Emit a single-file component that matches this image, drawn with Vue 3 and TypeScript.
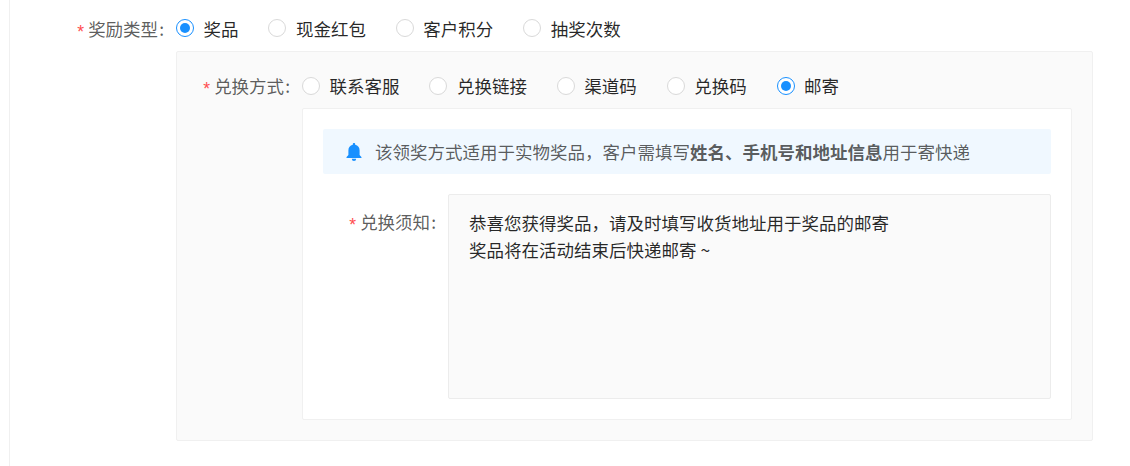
<script setup lang="ts">
const rewardTypes = [
  { label: '奖品', checked: true },
  { label: '现金红包', checked: false },
  { label: '客户积分', checked: false },
  { label: '抽奖次数', checked: false },
]
const methods = [
  { label: '联系客服', checked: false },
  { label: '兑换链接', checked: false },
  { label: '渠道码', checked: false },
  { label: '兑换码', checked: false },
  { label: '邮寄', checked: true },
]
const notice = '恭喜您获得奖品，请及时填写收货地址用于奖品的邮寄\n奖品将在活动结束后快递邮寄 ~'
</script>

<template>
  <div class="page">
    <div class="form">
      <div class="row top-row">
        <div class="label label-top"><span class="req">*</span>奖励类型<span class="colon">:</span></div>
        <div class="radios radios-top">
          <label v-for="r in rewardTypes" :key="r.label" class="radio">
            <span class="dot" :class="{ on: r.checked }"></span>
            <span>{{ r.label }}</span>
          </label>
        </div>
      </div>
      <div class="panel">
        <div class="row method-row">
          <div class="label label-method"><span class="req">*</span>兑换方式<span class="colon">:</span></div>
          <div class="radios">
            <label v-for="r in methods" :key="r.label" class="radio">
              <span class="dot" :class="{ on: r.checked }"></span>
              <span>{{ r.label }}</span>
            </label>
          </div>
        </div>
        <div class="inner">
          <div class="alert">
            <svg class="bell" viewBox="0 0 16 18" width="16" height="18" fill="#1890ff" aria-hidden="true">
              <path d="M8 0c-.7 0-1.2.5-1.2 1.2v.6C4 2.3 2.4 4.6 2.4 7.2V12L.6 14c-.3.4-.1 1 .4 1h14c.5 0 .7-.6.4-1l-1.8-2V7.2c0-2.6-1.6-4.9-4.4-5.4v-.6C9.2.5 8.7 0 8 0zM5.8 15.8a2.2 2.2 0 0 0 4.4 0z" />
            </svg>
            <span class="alert-text">该领奖方式适用于实物奖品，客户需填写<b>姓名、手机号和地址信息</b>用于寄快递</span>
          </div>
          <div class="row notice-row">
            <div class="label label-notice"><span class="req">*</span>兑换须知<span class="colon">:</span></div>
            <div class="textarea">{{ notice }}</div>
          </div>
        </div>
      </div>
    </div>
  </div>
</template>

<style>
html, body { margin: 0; background: #fff; overflow: hidden; }
</style>

<style scoped>
.page {
  box-sizing: border-box;
  width: 1130px;
  height: 466px;
  padding-left: 9px;
  font-family: "Noto Sans CJK SC", "Noto Sans", sans-serif;
  font-size: 17.5px;
  color: rgba(0, 0, 0, 0.85);
  background: #fff;
}
.form {
  box-sizing: border-box;
  height: 466px;
  border-left: 1px solid #f0f0f0;
  padding: 0 0 0 166px;
}
.row { display: flex; }
.top-row { height: 51px; align-items: center; margin-left: -166px; padding-top: 5px; box-sizing: border-box; }
.label {
  color: rgba(0, 0, 0, 0.65);
  text-align: right;
  white-space: nowrap;
  box-sizing: border-box;
}
.colon { margin-left: 1px; margin-right: 2px; }
.label-top { width: 155px; }
.label-top .colon { margin-right: 1px; }
.label-method { width: 105px; }
.label-notice { width: 115px; line-height: 27px; padding-top: 14px; }
.req {
  color: #ff4d4f;
  font-family: "Liberation Sans", sans-serif;
  font-size: 17.5px;
  margin-right: 4px;
  position: relative;
  top: 2px;
}
.radios { display: flex; align-items: center; margin-left: 10px; gap: 29.9px; }
.radios-top { margin-left: 11px; }
.radio {
  display: inline-flex;
  align-items: center;
  gap: 9.5px;
  white-space: nowrap;
}
.dot {
  box-sizing: border-box;
  width: 18px;
  height: 18px;
  border: 1px solid #d9d9d9;
  border-radius: 50%;
  background: #fff;
  position: relative;
  flex: none;
}
.dot.on { border-color: #1890ff; }
.dot.on::after {
  content: "";
  position: absolute;
  inset: 3px;
  border-radius: 50%;
  background: #1890ff;
}
.panel {
  box-sizing: border-box;
  width: 917px;
  height: 390px;
  background: #fafafa;
  border: 1px solid #f0f0f0;
  border-radius: 2px;
  padding: 0 20px 20px 10px;
}
.method-row { height: 56px; align-items: center; padding-top: 11px; box-sizing: border-box; }
.inner {
  box-sizing: border-box;
  width: 770px;
  height: 312px;
  margin-left: 115px;
  background: #fff;
  border: 1px solid #f0f0f0;
  border-radius: 2px;
  padding: 20px;
}
.alert {
  box-sizing: border-box;
  height: 45px;
  display: flex;
  align-items: center;
  padding-left: 23px;
  background: #f0f8ff;
  border-radius: 2px;
  color: rgba(0, 0, 0, 0.65);
}
.bell { flex: none; }
.alert-text { margin-left: 13px; white-space: nowrap; }
.alert-text b { font-weight: 700; }
.notice-row { margin-top: 20px; }
.textarea {
  box-sizing: border-box;
  width: 603px;
  height: 205px;
  margin-left: 10px;
  background: #fafafa;
  border: 1px solid #ececec;
  border-radius: 2px;
  padding: 14px 20px;
  line-height: 27px;
  white-space: pre-wrap;
  color: rgba(0, 0, 0, 0.85);
}
</style>
